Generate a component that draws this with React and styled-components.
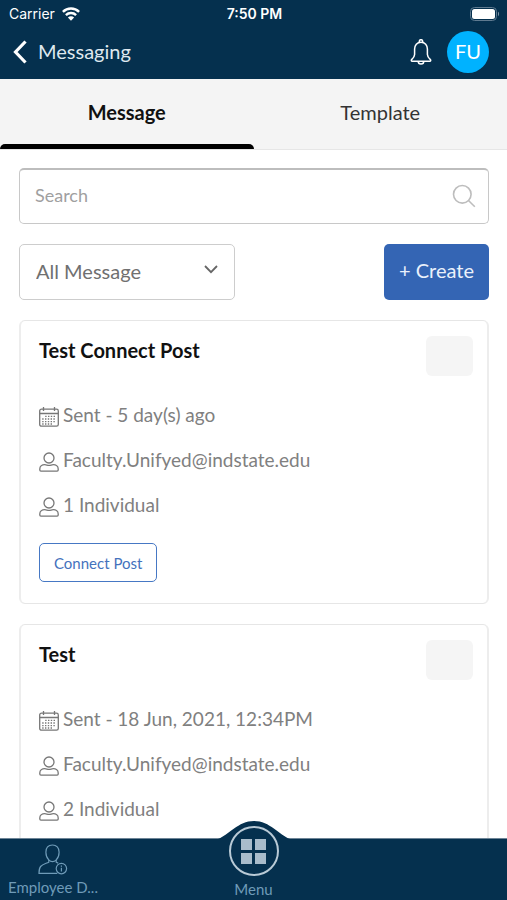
import React from 'react';
import styled, { createGlobalStyle } from 'styled-components';

const messages = [
	{
		id: 1,
		title: 'Test Connect Post',
		sent: 'Sent - 5 day(s) ago',
		from: 'Faculty.Unifyed@indstate.edu',
		to: '1 Individual',
		tag: 'Connect Post',
	},
	{
		id: 2,
		title: 'Test',
		sent: 'Sent - 18 Jun, 2021, 12:34PM',
		from: 'Faculty.Unifyed@indstate.edu',
		to: '2 Individual',
	},
];

const WifiIcon = () => (
	<svg width="18" height="14" viewBox="0 0 18 14" fill="none" stroke="#fff" strokeWidth="2.4" aria-hidden="true">
		<path d="M0.9 4.9a11.5 11.5 0 0 1 16.2 0" />
		<path d="M3.9 8.1a7.2 7.2 0 0 1 10.2 0" />
		<path d="M9 13.8 5.9 10.6a4.4 4.4 0 0 1 6.2 0z" fill="#fff" stroke="none" />
	</svg>
);

const BatteryIcon = () => (
	<svg width="30" height="14" viewBox="0 0 30 14" fill="none" aria-hidden="true">
		<rect x="0.5" y="0.5" width="26" height="13" rx="4" stroke="#5f7a90" />
		<rect x="2" y="2" width="23" height="10" rx="2.5" fill="#fff" />
		<path d="M28 4.8c1.4.4 1.4 4 0 4.4z" fill="#7d93a6" />
	</svg>
);

const BackIcon = () => (
	<svg width="14" height="24" viewBox="0 0 14 24" fill="none" stroke="#fff" strokeWidth="3.2" aria-hidden="true">
		<path d="M12.5 1.5 2.5 12l10 10.5" />
	</svg>
);

const BellIcon = () => (
	<svg width="22" height="26" viewBox="0 0 22 26" fill="none" stroke="#fff" strokeWidth="1.5" strokeLinejoin="round" aria-hidden="true">
		<path d="M9.3 3.2V2.4a1.7 1.7 0 0 1 3.4 0v.8" />
		<path d="M11 3.2c-4 0-6.4 2.9-6.4 6.8v5.4c0 2.3-1.2 3.5-3 5.2-.6.7-.3 1.6.6 1.6h17.6c.9 0 1.2-.9.6-1.6-1.8-1.7-3-2.9-3-5.2V10c0-3.9-2.4-6.8-6.4-6.8z" />
		<path d="M8.2 22.2a2.8 2.8 0 0 0 5.6 0" />
	</svg>
);

const SearchIcon = () => (
	<svg width="24" height="24" viewBox="0 0 24 24" fill="none" stroke="#bdbdbd" strokeWidth="1.6" aria-hidden="true">
		<circle cx="10.3" cy="10.3" r="8.8" />
		<path d="m16.5 16.5 6.3 6.3" />
	</svg>
);

const ChevronIcon = () => (
	<svg width="14" height="9" viewBox="0 0 14 9" fill="none" stroke="#666" strokeWidth="1.8" aria-hidden="true">
		<path d="m1 1 6 6.2L13 1" />
	</svg>
);

const CalendarIcon = () => (
	<svg width="20" height="20" viewBox="0 0 20 20" fill="none" stroke="#777" strokeWidth="1.3" aria-hidden="true">
		<rect x="0.7" y="2.2" width="18.6" height="17" rx="1.8" />
		<path d="M0.7 6.5h18.6M4.5 0v4M15.5 0v4" />
		<path d="M6.2 9.3h11M3.2 12h14M3.2 14.6h14M3.2 17h11" strokeDasharray="1.4 1.4" />
	</svg>
);

const PersonIcon = () => (
	<svg width="20" height="20" viewBox="0 0 20 20" fill="none" stroke="#777" strokeWidth="1.3" aria-hidden="true">
		<circle cx="10" cy="6" r="5" />
		<path d="M.8 18v-1c0-2.7 2.3-4.3 5-4.3 1.5 0 2.6.7 4.2.7s2.7-.7 4.2-.7c2.7 0 5 1.6 5 4.3v1c0 .7-.4 1.1-1.1 1.1H1.9c-.7 0-1.1-.4-1.1-1.1z" />
	</svg>
);

const EmployeeIcon = () => (
	<svg width="30" height="31" viewBox="0 0 30 31" fill="none" stroke="#6f9bb8" strokeWidth="1.2" aria-hidden="true">
		<path d="M14.5 1c-4 0-6.6 2.8-6.6 7.2 0 3 1 5.8 2.9 7.7 1.1 1.2 2.3 1.8 3.7 1.8s2.6-.6 3.7-1.8c1.9-1.9 2.9-4.700 2.900-7.700C21.1 3.800 18.500 1 14.500 1z" />
		<path d="M10.8 16v2.2c-3.3 1.5-6.2 2-8.2 4.3C1.2 24.2 1 27 1 29.300h18.300M18.200 16v2.200l2 .9" />
		<circle cx="23.4" cy="24.6" r="5.2" />
		<path d="M23.4 23.7v3.8M23.4 21.6v1.2" />
	</svg>
);

const GridIcon = () => (
	<svg width="25" height="25" viewBox="0 0 25 25" fill="#a9bccb" aria-hidden="true">
		<path d="M0 0h11v11H0zM14 0h11v11H14zM0 14h11v11H0zM14 14h11v11H14z" />
	</svg>
);

const MessageCard = ({ message }) => (
	<Card>
		<CardHead>
			<CardTitle>{message.title}</CardTitle>
			<MoreButton type="button" aria-label="More options" />
		</CardHead>
		<Details>
			<Detail><CalendarIcon />{message.sent}</Detail>
			<Detail><PersonIcon />{message.from}</Detail>
			<Detail><PersonIcon />{message.to}</Detail>
		</Details>
		{message.tag && <TagButton type="button">{message.tag}</TagButton>}
	</Card>
);

const App = () => {
	return (
		<Page>
			<GlobalStyle />
			<TopBar>
				<StatusBar>
					<Carrier>Carrier <WifiIcon /></Carrier>
					<Clock>7:50 PM</Clock>
					<BatteryIcon />
				</StatusBar>
				<TitleBar>
					<BackLink href="#home"><BackIcon /><BackLabel>Messaging</BackLabel></BackLink>
					<BellButton type="button" aria-label="Notifications"><BellIcon /></BellButton>
					<Avatar type="button">FU</Avatar>
				</TitleBar>
			</TopBar>
			<Tabs role="tablist">
				<Tab type="button" role="tab" aria-selected="true" $active>Message</Tab>
				<Tab type="button" role="tab" aria-selected="false">Template</Tab>
			</Tabs>
			<Content>
				<SearchBox>
					<SearchInput type="search" placeholder="Search" aria-label="Search" />
					<SearchIcon />
				</SearchBox>
				<Actions>
					<SelectBox>
						<Select aria-label="Filter messages" defaultValue="all">
							<option value="all">All Message</option>
						</Select>
						<ChevronIcon />
					</SelectBox>
					<CreateButton type="button">+ Create</CreateButton>
				</Actions>
				{messages.map((message) => (
					<MessageCard key={message.id} message={message} />
				))}
			</Content>
			<BottomNav>
				<NavLink href="#employee"><EmployeeIcon />Employee D...</NavLink>
				<MenuLink href="#menu">
					<Bump viewBox="0 0 72 20" aria-hidden="true">
						<path d="M0 19C11 15 20 1 36 1s25 14 36 18v1H0z" fill="#05304e" />
					</Bump>
					<MenuCircle><GridIcon /></MenuCircle>
					Menu
				</MenuLink>
			</BottomNav>
		</Page>
	);
};

const GlobalStyle = createGlobalStyle`
	* {
		box-sizing: border-box;
	}

	body {
		margin: 0;
		background: #fff;
		font-family: Lato, "Open Sans", sans-serif;
	}

	button, input, select {
		font-family: inherit;
	}

	svg {
		flex-shrink: 0;
	}
`;

const Page = styled.div`
	display: flex;
	flex-direction: column;
	height: 100vh;
	overflow: hidden;
`;

const TopBar = styled.header`
	flex-shrink: 0;
	background: #05304e;
	color: #fff;
`;

const StatusBar = styled.div`
	display: grid;
	grid-template-columns: 1fr auto 1fr;
	align-items: center;
	height: 27px;
	padding: 0 7px 0 9px;
	font-family: Inter, sans-serif;
	font-size: 14px;

	> svg {
		justify-self: end;
	}
`;

const Carrier = styled.span`
	display: flex;
	align-items: center;
	gap: 7px;
`;

const Clock = styled.span`
	font-weight: 600;
`;

const TitleBar = styled.div`
	display: flex;
	align-items: center;
	height: 52px;
	padding: 0 18px 2px 13px;
`;

const BackLink = styled.a`
	display: flex;
	align-items: center;
	gap: 11px;
	margin-right: auto;
	color: #dfe8ef;
	font-size: 20px;
	text-decoration: none;
`;

const BackLabel = styled.span`
	padding-bottom: 2px;
`;

const BellButton = styled.button`
	display: flex;
	margin-right: 15px;
	padding: 0;
	border: 0;
	background: none;
`;

const Avatar = styled.button`
	width: 42px;
	height: 42px;
	padding: 0 0 2px;
	border: 0;
	border-radius: 50%;
	background: #00b2ff;
	color: #fff;
	font-size: 20px;
`;

const Tabs = styled.div`
	display: flex;
	flex-shrink: 0;
	height: 71px;
	border-bottom: 1px solid #e6e6e6;
	background: #f4f4f4;
`;

const Tab = styled.button`
	position: relative;
	flex: 1;
	padding: 0 0 4px;
	border: 0;
	background: none;
	color: ${(props) => (props.$active ? '#111' : '#333')};
	font-size: 20px;
	font-weight: ${(props) => (props.$active ? 700 : 400)};

	&::after {
		content: "";
		display: ${(props) => (props.$active ? 'block' : 'none')};
		position: absolute;
		right: 0;
		bottom: 0;
		left: 0;
		height: 5px;
		border-radius: 5px 5px 0 0;
		background: #000;
	}
`;

const Content = styled.main`
	display: flex;
	flex: 1;
	flex-direction: column;
	gap: 20px;
	min-height: 0;
	overflow: hidden;
	padding: 18px 18px 0 19px;

	> * {
		flex-shrink: 0;
	}
`;

const SearchBox = styled.div`
	display: flex;
	align-items: center;
	height: 56px;
	padding: 0 12px 2px 15px;
	border: 1px solid #c8c8c8;
	border-top: 2px solid #bdbdbd;
	border-radius: 5px;
`;

const SearchInput = styled.input`
	flex: 1;
	min-width: 0;
	padding: 0 0 2px;
	border: 0;
	outline: 0;
	background: none;
	appearance: none;
	font-size: 18px;

	&::placeholder {
		color: #a0a0a0;
	}
`;

const Actions = styled.div`
	display: flex;
	justify-content: space-between;
`;

const SelectBox = styled.div`
	position: relative;

	svg {
		position: absolute;
		top: 21px;
		right: 17px;
		pointer-events: none;
	}
`;

const Select = styled.select`
	display: block;
	width: 216px;
	height: 56px;
	padding: 0 40px 2px 16px;
	border: 1px solid #cdcdcd;
	border-radius: 5px;
	background: #fff;
	appearance: none;
	color: #707070;
	font-size: 20px;
`;

const CreateButton = styled.button`
	width: 105px;
	height: 56px;
	padding: 0 0 4px;
	border: 0;
	border-radius: 5px;
	background: #3465b4;
	color: #eaf1fb;
	font-size: 20px;
`;

const Card = styled.article`
	padding: 15px 14px 21px 18px;
	border: 1px solid #e6e6e6;
	border-right: 2px solid #ededed;
	border-left: 2px solid #ededed;
	border-radius: 6px;
`;

const CardHead = styled.div`
	display: flex;
	align-items: flex-start;
	justify-content: space-between;
	margin-bottom: 16px;
`;

const CardTitle = styled.h2`
	margin: 0;
	color: #111;
	font-size: 20px;
	font-weight: 700;
	line-height: 28px;
`;

const MoreButton = styled.button`
	width: 47px;
	height: 40px;
	border: 0;
	border-radius: 6px;
	background: #f5f5f5;
`;

const Details = styled.ul`
	margin: 0 0 16px;
	padding: 0;
	list-style: none;
`;

const Detail = styled.li`
	display: flex;
	align-items: center;
	gap: 4px;
	color: #808080;
	font-size: 19px;
	line-height: 45px;

	svg {
		margin-top: 4px;
	}
`;

const TagButton = styled.button`
	display: block;
	height: 39px;
	padding: 0 14px;
	border: 1px solid #4678c4;
	border-radius: 5px;
	background: #fff;
	color: #4472bd;
	font-size: 15px;
`;

const BottomNav = styled.nav`
	display: grid;
	flex-shrink: 0;
	grid-template-columns: 1fr 72px 1fr;
	height: 62px;
	border-top: 1px solid #6d8496;
	background: #05304e;
	font-size: 15px;
	line-height: 18px;
`;

const NavLink = styled.a`
	display: flex;
	flex-direction: column;
	align-items: center;
	justify-self: start;
	gap: 3px;
	width: 106px;
	padding-top: 5px;
	color: #6f9bb8;
	text-decoration: none;
`;

const MenuLink = styled.a`
	position: relative;
	display: flex;
	flex-direction: column;
	align-items: center;
	gap: 4px;
	margin-top: -13px;
	color: #6f9bb8;
	text-decoration: none;
`;

const Bump = styled.svg`
	position: absolute;
	top: -6px;
	left: 0;
	width: 72px;
	height: 20px;
`;

const MenuCircle = styled.span`
	position: relative;
	display: flex;
	align-items: center;
	justify-content: center;
	width: 50px;
	height: 50px;
	border: 2px solid #b9cad6;
	border-radius: 50%;
	background: #05304e;
`;

export default App;
